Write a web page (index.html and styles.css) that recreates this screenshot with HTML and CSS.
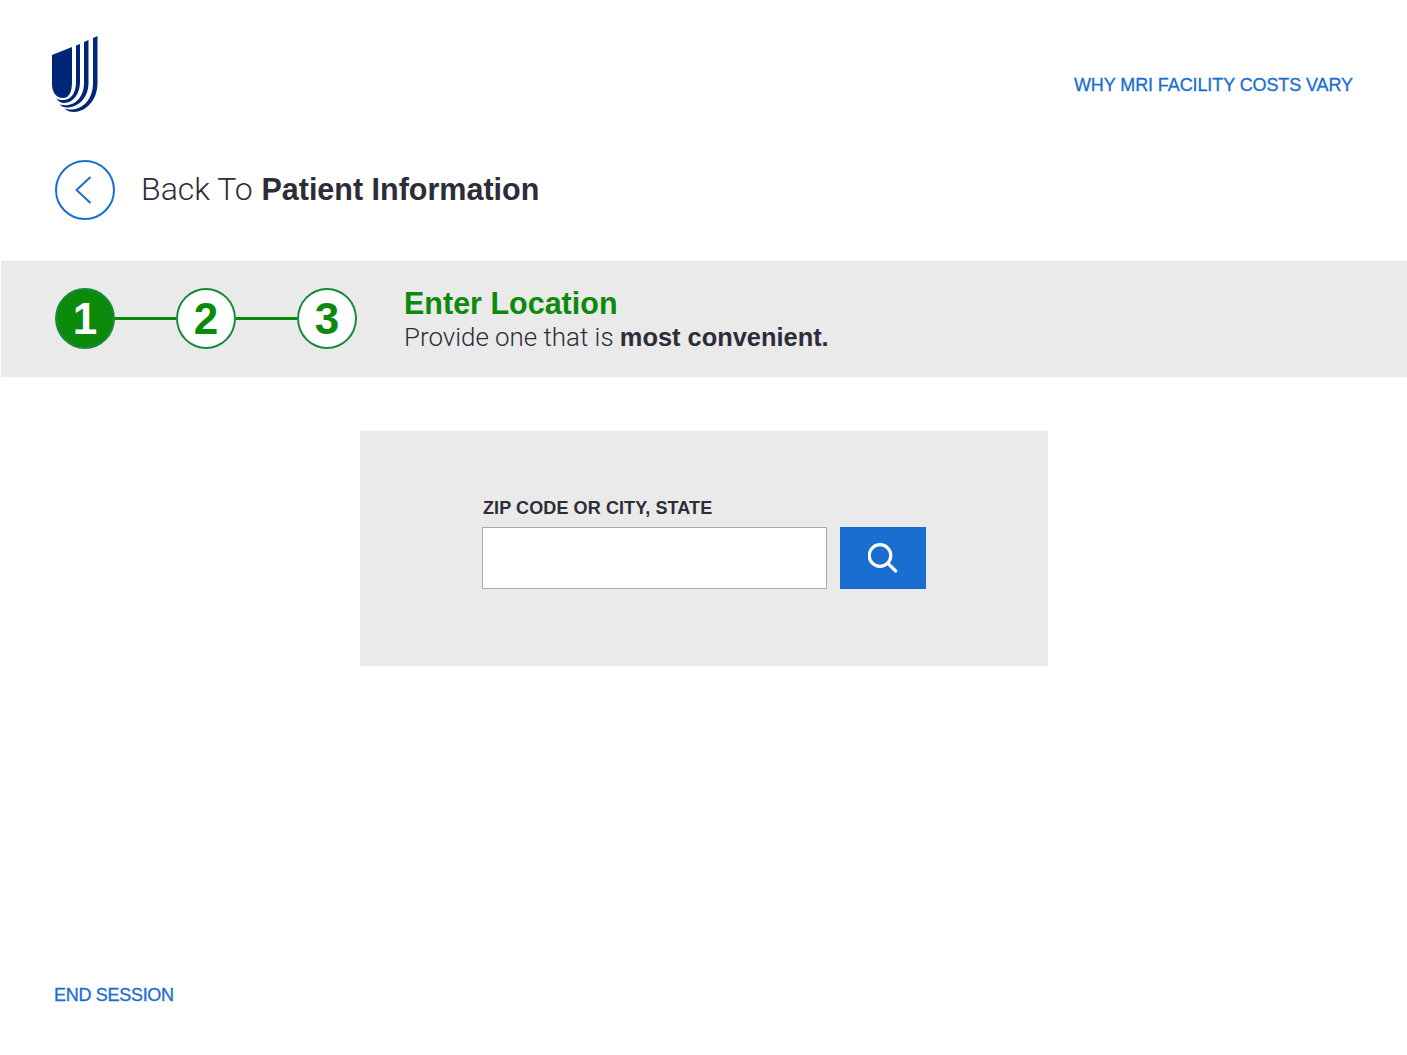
FILE: index.html
```html
<!DOCTYPE html>
<html lang="en">
<head>
    <meta charset="UTF-8">
    <meta name="viewport" content="width=device-width, initial-scale=1.0">
    <title>Enter Location</title>
    <link rel="stylesheet" href="styles.css">
</head>
<body>
    <!-- Header Section -->
    <header class="top-bar">
        <svg class="logo" viewBox="0 0 47 76" width="47" height="76" aria-label="Logo">
            <path d="M0 19 L20 11 V46 C20 56 17 62 11 62 C4 62 0 56 0 48 Z"/>
            <path d="M24 9.5 L28 8 V46 C28 58 21 67 12 67 C9 67 6 65 4 62.5 C6 63.5 8.5 64 11 64 C19 64 24 57 24 46 Z"/>
            <path d="M32 6 L36.5 4 V47 C36.5 62 26 71.5 15 71.5 C12 71.5 9.5 70.5 7.5 68.5 C9.5 69 11.5 69.3 13.5 69.3 C24 69.3 32 60 32 47 Z"/>
            <path d="M41 2 L45.5 0 V47 C45.5 65 33 76 22 76 C18 76 15 75 12.5 72.5 C15 73.3 17 73.5 19 73.5 C31 73.5 41 63 41 47 Z"/>
        </svg>
        <a class="top-link" href="#">WHY MRI FACILITY COSTS VARY</a>
    </header>

    <a class="back-row" href="#">
        <span class="back-circle">
            <svg viewBox="0 0 20 32" width="20" height="32">
                <path d="M15.5 3 L1.5 16 L15.5 29" fill="none" stroke="#196ecf" stroke-width="2"/>
            </svg>
        </span>
        <span class="back-text">Back To <strong>Patient Information</strong></span>
    </a>

    <!-- Steps -->
    <section class="steps-band">
        <div class="steps">
            <span class="step step-active">1</span>
            <span class="step-line"></span>
            <span class="step">2</span>
            <span class="step-line"></span>
            <span class="step">3</span>
        </div>
        <div class="step-copy">
            <h1>Enter Location</h1>
            <p>Provide one that is <strong>most convenient.</strong></p>
        </div>
    </section>

    <form class="search-panel">
        <label for="location">ZIP CODE OR CITY, STATE</label>
        <div class="search-row">
            <input type="text" id="location" name="location">
            <button type="button" class="search-btn" aria-label="Search">
                <svg viewBox="0 0 30 30" width="30" height="30">
                    <circle cx="12" cy="12.5" r="10.8" fill="none" stroke="#fff" stroke-width="3.2"/>
                    <path d="M20 20.5 L27.7 28" fill="none" stroke="#fff" stroke-width="3.2" stroke-linecap="round"/>
                </svg>
            </button>
        </div>
    </form>

    <footer class="bottom-bar">
        <a href="#">END SESSION</a>
    </footer>
</body>
</html>
```

FILE: styles.css
```css
/* General Styles */
html,
body {
    height: 100%;
}

body {
    font-family: 'Liberation Sans', Arial, sans-serif;
    margin: 0;
    padding: 0;
    background-color: #fff;
    color: #2d2d39;
    display: flex;
    flex-direction: column;
}

a {
    color: #196ecf;
    text-decoration: none;
}

.top-bar {
    display: flex;
    justify-content: space-between;
    align-items: flex-start;
    padding: 36px 54px 0 52px;
}

.logo {
    display: block;
    fill: #002677;
}

.top-link {
    font-size: 18px;
    line-height: 21px;
    letter-spacing: -0.1px;
    -webkit-text-stroke: 0.3px #196ecf;
    margin-top: 39px;
}

.back-row {
    display: flex;
    align-items: center;
    gap: 26px;
    margin: 48px 0 0 55px;
    color: inherit;
}

.back-circle {
    width: 56px;
    height: 56px;
    border: 2px solid #196ecf;
    border-radius: 50%;
    display: flex;
    align-items: center;
    justify-content: center;
}

.back-text {
    font-family: 'Roboto', 'Liberation Sans', sans-serif;
    font-weight: 300;
    font-size: 32px;
    margin-bottom: 2px;
}

.back-text strong {
    font-family: 'Liberation Sans', Arial, sans-serif;
    font-weight: 700;
    font-size: 30.5px;
    margin-left: 1px;
}

.steps-band {
    display: flex;
    align-items: center;
    height: 116px;
    margin: 41px 0 0 1px;
    padding-left: 54px;
    background-color: #eaeaea;
}

.steps {
    display: flex;
    align-items: center;
    margin-bottom: 1px;
}

.step {
    width: 56px;
    height: 57px;
    border: 2px solid #168a3a;
    border-radius: 50%;
    background-color: #fff;
    color: #0b8a0b;
    font-size: 44px;
    font-weight: 700;
    display: flex;
    align-items: center;
    justify-content: center;
}

.step-active {
    background-color: #0b8a0b;
    color: #fff;
}

.step-line {
    width: 61px;
    height: 3px;
    background-color: #0b8a0b;
}

.step-copy {
    margin: 2px 0 0 47px;
}

.step-copy h1 {
    margin: 0;
    font-size: 30.5px;
    line-height: 34px;
    font-weight: 700;
    color: #0b8a0b;
}

.step-copy p {
    margin: 0;
    font-family: 'Roboto', 'Liberation Sans', sans-serif;
    font-weight: 300;
    font-size: 25.9px;
    line-height: 34px;
}

.step-copy p strong {
    font-family: 'Liberation Sans', Arial, sans-serif;
    font-weight: 700;
    font-size: 25.4px;
}

.search-panel {
    width: 688px;
    height: 235px;
    box-sizing: border-box;
    margin: 54px 0 0 360px;
    padding: 66px 0 0 122px;
    background-color: #eaeaea;
}

.search-panel label {
    display: block;
    margin: 0 0 8px 1px;
    font-size: 18px;
    line-height: 22px;
    font-weight: 700;
    letter-spacing: 0.1px;
}

.search-row {
    display: flex;
    gap: 13px;
}

.search-row input {
    width: 345px;
    height: 62px;
    box-sizing: border-box;
    border: 1px solid #aaa;
    background-color: #fff;
}

.search-btn {
    width: 86px;
    height: 62px;
    border: none;
    padding: 0;
    background-color: #196ecf;
    display: flex;
    align-items: center;
    justify-content: center;
}

.bottom-bar {
    margin-top: auto;
    padding: 0 0 50px 54px;
    font-size: 18px;
    line-height: 20px;
    letter-spacing: -0.3px;
    -webkit-text-stroke: 0.3px #196ecf;
}
```
